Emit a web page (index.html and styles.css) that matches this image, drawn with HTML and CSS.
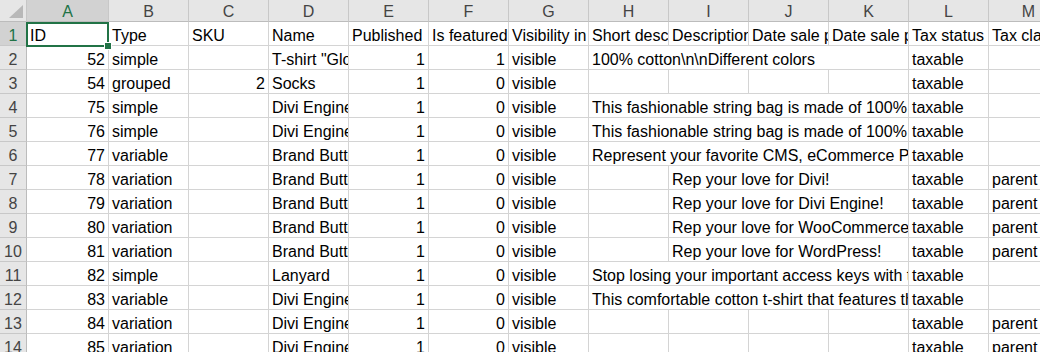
FILE: index.html
```html
<!DOCTYPE html>
<html>
<head>
<meta charset="utf-8">
<link rel="stylesheet" href="styles.css">
</head>
<body>
<div class="sheet">
  <div class="grid">
    <div class="corner"><svg width="26" height="21" viewBox="0 0 26 21"><polygon points="23,5 23,18 9,18" fill="#b8b8b8"/></svg></div>
    <div class="ch sel">A</div><div class="ch">B</div><div class="ch">C</div><div class="ch">D</div><div class="ch">E</div><div class="ch">F</div><div class="ch">G</div><div class="ch">H</div><div class="ch">I</div><div class="ch">J</div><div class="ch">K</div><div class="ch">L</div><div class="ch">M</div>

    <div class="rh sel">1</div>
    <div class="c">ID</div><div class="c">Type</div><div class="c">SKU</div><div class="c">Name</div><div class="c">Published</div><div class="c">Is featured?</div><div class="c">Visibility in catalog</div><div class="c">Short description</div><div class="c">Description</div><div class="c">Date sale price starts</div><div class="c">Date sale price ends</div><div class="c">Tax status</div><div class="c">Tax class</div>

    <div class="rh">2</div>
    <div class="c n">52</div><div class="c">simple</div><div class="c"></div><div class="c">T-shirt "Glow in the dark"</div><div class="c n">1</div><div class="c n">1</div><div class="c">visible</div><div class="c s4">100% cotton\n\nDifferent colors</div><div class="c">taxable</div><div class="c"></div>

    <div class="rh">3</div>
    <div class="c n">54</div><div class="c">grouped</div><div class="c n">2</div><div class="c">Socks</div><div class="c n">1</div><div class="c n">0</div><div class="c">visible</div><div class="c"></div><div class="c"></div><div class="c"></div><div class="c"></div><div class="c">taxable</div><div class="c"></div>

    <div class="rh">4</div>
    <div class="c n">75</div><div class="c">simple</div><div class="c"></div><div class="c">Divi Engine String Bag</div><div class="c n">1</div><div class="c n">0</div><div class="c">visible</div><div class="c s4">This fashionable string bag is made of 100% cotton</div><div class="c">taxable</div><div class="c"></div>

    <div class="rh">5</div>
    <div class="c n">76</div><div class="c">simple</div><div class="c"></div><div class="c">Divi Engine String Bag</div><div class="c n">1</div><div class="c n">0</div><div class="c">visible</div><div class="c s4">This fashionable string bag is made of 100% cotton</div><div class="c">taxable</div><div class="c"></div>

    <div class="rh">6</div>
    <div class="c n">77</div><div class="c">variable</div><div class="c"></div><div class="c">Brand Buttons</div><div class="c n">1</div><div class="c n">0</div><div class="c">visible</div><div class="c s4">Represent your favorite CMS, eCommerce Platform</div><div class="c">taxable</div><div class="c"></div>

    <div class="rh">7</div>
    <div class="c n">78</div><div class="c">variation</div><div class="c"></div><div class="c">Brand Buttons - Divi</div><div class="c n">1</div><div class="c n">0</div><div class="c">visible</div><div class="c"></div><div class="c s3">Rep your love for Divi!</div><div class="c">taxable</div><div class="c">parent</div>

    <div class="rh">8</div>
    <div class="c n">79</div><div class="c">variation</div><div class="c"></div><div class="c">Brand Buttons - Divi Engine</div><div class="c n">1</div><div class="c n">0</div><div class="c">visible</div><div class="c"></div><div class="c s3">Rep your love for Divi Engine!</div><div class="c">taxable</div><div class="c">parent</div>

    <div class="rh">9</div>
    <div class="c n">80</div><div class="c">variation</div><div class="c"></div><div class="c">Brand Buttons - WooCommerce</div><div class="c n">1</div><div class="c n">0</div><div class="c">visible</div><div class="c"></div><div class="c s3">Rep your love for WooCommerce!</div><div class="c">taxable</div><div class="c">parent</div>

    <div class="rh">10</div>
    <div class="c n">81</div><div class="c">variation</div><div class="c"></div><div class="c">Brand Buttons - WordPress</div><div class="c n">1</div><div class="c n">0</div><div class="c">visible</div><div class="c"></div><div class="c s3">Rep your love for WordPress!</div><div class="c">taxable</div><div class="c">parent</div>

    <div class="rh">11</div>
    <div class="c n">82</div><div class="c">simple</div><div class="c"></div><div class="c">Lanyard</div><div class="c n">1</div><div class="c n">0</div><div class="c">visible</div><div class="c s4">Stop losing your important access keys with this lanyard</div><div class="c">taxable</div><div class="c"></div>

    <div class="rh">12</div>
    <div class="c n">83</div><div class="c">variable</div><div class="c"></div><div class="c">Divi Engine T-Shirt</div><div class="c n">1</div><div class="c n">0</div><div class="c">visible</div><div class="c s4">This comfortable cotton t-shirt that features the logo</div><div class="c">taxable</div><div class="c"></div>

    <div class="rh">13</div>
    <div class="c n">84</div><div class="c">variation</div><div class="c"></div><div class="c">Divi Engine T-Shirt - Small</div><div class="c n">1</div><div class="c n">0</div><div class="c">visible</div><div class="c"></div><div class="c"></div><div class="c"></div><div class="c"></div><div class="c">taxable</div><div class="c">parent</div>

    <div class="rh">14</div>
    <div class="c n">85</div><div class="c">variation</div><div class="c"></div><div class="c">Divi Engine T-Shirt - Medium</div><div class="c n">1</div><div class="c n">0</div><div class="c">visible</div><div class="c"></div><div class="c"></div><div class="c"></div><div class="c"></div><div class="c">taxable</div><div class="c">parent</div>
  </div>
  <div class="selection"><span class="handle"></span></div>
</div>
</body>
</html>
```

FILE: styles.css
```css
html, body {
  margin: 0;
  padding: 0;
  background: #ffffff;
  overflow: hidden;
}

.sheet {
  position: relative;
  width: 1040px;
  height: 352px;
  overflow: hidden;
  font-family: "Liberation Sans", Arial, sans-serif;
  font-size: 16px;
  color: #000000;
}

.grid {
  display: grid;
  grid-template-columns: 27px 82px repeat(12, 80px);
  grid-template-rows: 22px;
  grid-auto-rows: 24px;
  width: 1069px;
}

.grid > div {
  box-sizing: border-box;
  overflow: hidden;
  white-space: nowrap;
}

.corner {
  background: #e6e6e6;
  border-right: 1px solid #c6c6c6;
  border-bottom: 1px solid #bcbcbc;
}

.corner svg {
  display: block;
}

.ch {
  background: #e6e6e6;
  color: #444444;
  text-align: center;
  border-right: 1px solid #c8c8c8;
  border-bottom: 1px solid #bcbcbc;
  padding-top: 3px;
  line-height: 18px;
}

.rh {
  background: #e6e6e6;
  color: #444444;
  text-align: center;
  border-right: 1px solid #bcbcbc;
  border-bottom: 1px solid #c8c8c8;
  padding-top: 4px;
  line-height: 19px;
}

.ch.sel,
.rh.sel {
  background: #d2d2d2;
  color: #217346;
}

.c {
  border-right: 1px solid #d4d4d4;
  border-bottom: 1px solid #d4d4d4;
  padding: 4px 3px 0 3px;
  line-height: 19px;
  text-align: left;
}

.c.n {
  text-align: right;
}

.c.s3 {
  grid-column: span 3;
}

.c.s4 {
  grid-column: span 4;
}

.selection {
  position: absolute;
  left: 26px;
  top: 22px;
  width: 83px;
  height: 25px;
  box-sizing: border-box;
  border: 2px solid #217346;
}

.handle {
  position: absolute;
  right: -4px;
  bottom: -4px;
  width: 6px;
  height: 6px;
  background: #217346;
  box-shadow: 0 0 0 1px #ffffff;
}
```
